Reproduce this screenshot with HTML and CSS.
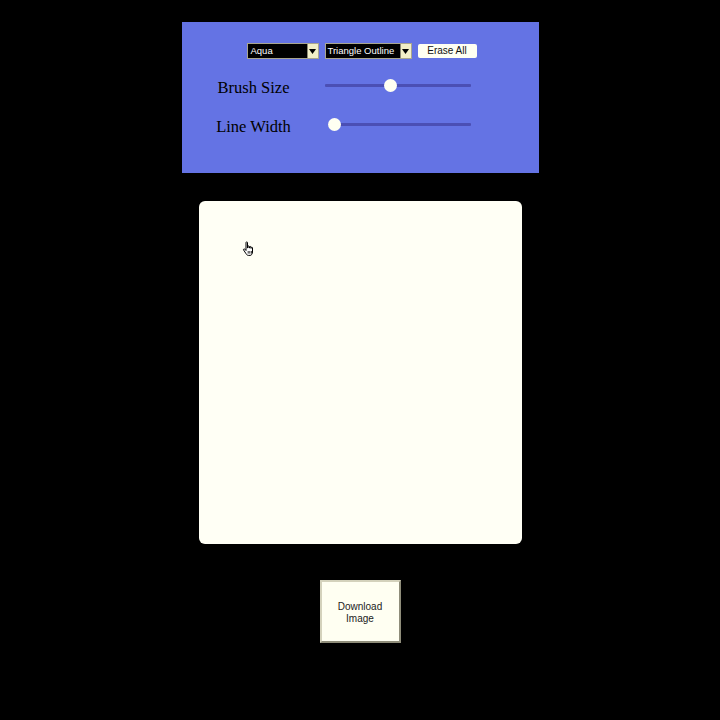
FILE: index.html
```html
<!DOCTYPE html>
<html>
<head>
<meta charset="utf-8">
<link rel="stylesheet" href="styles.css">
</head>
<body>
<div class="page">
  <div class="panel">
    <div class="toolbar">
      <div class="select sel-color"><span class="sel-text">Aqua</span><span class="sel-arrow"><svg width="7" height="5" viewBox="0 0 7 5"><path d="M0 0h7L3.5 5z" fill="#000"/></svg></span></div>
      <div class="select sel-shape"><span class="sel-text">Triangle Outline</span><span class="sel-arrow"><svg width="7" height="5" viewBox="0 0 7 5"><path d="M0 0h7L3.5 5z" fill="#000"/></svg></span></div>
      <button class="erase">Erase All</button>
    </div>
    <div class="row row-brush">
      <label class="label">Brush Size</label>
      <input class="slider slider-brush" type="range" min="0" max="100" value="45">
    </div>
    <div class="row row-line">
      <label class="label">Line Width</label>
      <input class="slider slider-line" type="range" min="0" max="100" value="0">
    </div>
  </div>
  <div class="canvas">
    <svg class="cursor" width="14" height="16" viewBox="0 0 14 16">
      <path d="M4 1.5c0-.8 1.5-.8 1.5 0V7h.3V5.5c0-.8 1.4-.8 1.4 0V7h.3V6c0-.8 1.4-.8 1.4 0v1.3h.3V6.8c0-.8 1.3-.8 1.300 0v4.2c0 1.8-1 3.4-2.4 3.4H6.3c-1 0-1.6-.7-2.2-1.6L1.6 9c-.5-.8.5-1.5 1.2-.9L4 9.5z" fill="#fff" stroke="#000" stroke-width="1" stroke-linejoin="round"/>
      <path d="M6.2 10v2.6M7.8 10v2.6M9.4 10v2.6" stroke="#000" stroke-width=".8"/>
    </svg>
  </div>
  <button class="download">Download<br>Image</button>
</div>
</body>
</html>
```
FILE: styles.css
```css
html, body {
  margin: 0;
  padding: 0;
  background: #000;
}
.page {
  width: 720px;
  height: 720px;
  display: flex;
  flex-direction: column;
  align-items: center;
  padding-top: 22px;
  box-sizing: border-box;
}
.panel {
  width: 357px;
  height: 151px;
  background: #6473e4;
  box-sizing: border-box;
  padding-top: 21px;
  display: flex;
  flex-direction: column;
}
.toolbar {
  display: flex;
  justify-content: center;
  align-items: flex-start;
  gap: 6px;
  height: 16px;
  margin-left: 3px;
}
.select {
  display: flex;
  height: 16px;
  box-sizing: border-box;
  border: 1px solid #a9a68e;
  background: #000;
  color: #fff;
  font-family: "Liberation Sans", Arial, sans-serif;
  font-size: 9.5px;
  line-height: 14px;
}
.sel-color { width: 72px; }
.sel-shape { width: 87px; }
.sel-text {
  flex: 1;
  padding-left: 3px;
  white-space: nowrap;
  overflow: hidden;
}
.sel-shape .sel-text { padding-left: 2px; }
.sel-arrow {
  width: 10px;
  background: #f2efc8;
  border-left: 1px solid #8d8a74;
  display: flex;
  align-items: center;
  justify-content: center;
}
.erase {
  width: 59px;
  height: 14px;
  margin-top: 1px;
  padding: 0;
  border: none;
  border-radius: 2px;
  background: #fffff2;
  font-family: "Liberation Sans", Arial, sans-serif;
  font-size: 10px;
  line-height: 14px;
  color: #111;
}
.row {
  display: flex;
  align-items: center;
  height: 24px;
}
.row-brush { margin-top: 17px; }
.row-line { margin-top: 15px; }
.label {
  width: 142px;
  text-align: center;
  font-family: "Liberation Serif", "Times New Roman", serif;
  font-size: 16.5px;
  color: #000;
  padding-left: 1px;
}
.slider {
  -webkit-appearance: none;
  appearance: none;
  background: transparent;
  height: 16px;
  margin: 0 0 6px 0;
  padding: 0;
}
.slider-brush { width: 146px; margin-left: 0; }
.slider-line { width: 143px; margin-left: 3px; }
.slider::-webkit-slider-runnable-track {
  height: 3px;
  background: #4b4fb4;
  border-radius: 1px;
}
.slider::-webkit-slider-thumb {
  -webkit-appearance: none;
  width: 13px;
  height: 13px;
  border-radius: 50%;
  background: #fffff2;
  margin-top: -5px;
  border: none;
}
.canvas {
  position: relative;
  margin-top: 28px;
  width: 323px;
  height: 343px;
  background: #fffff5;
  border-radius: 6px;
}
.cursor {
  position: absolute;
  left: 43px;
  top: 40px;
}
.download {
  margin-top: 36px;
  width: 81px;
  height: 63px;
  padding: 3px 0 0 0;
  background: #fffff2;
  border: 2px solid;
  border-color: #d4d2bc #8f8d7a #8f8d7a #d4d2bc;
  font-family: "Liberation Sans", Arial, sans-serif;
  font-size: 10px;
  line-height: 12px;
  color: #222;
}
```
